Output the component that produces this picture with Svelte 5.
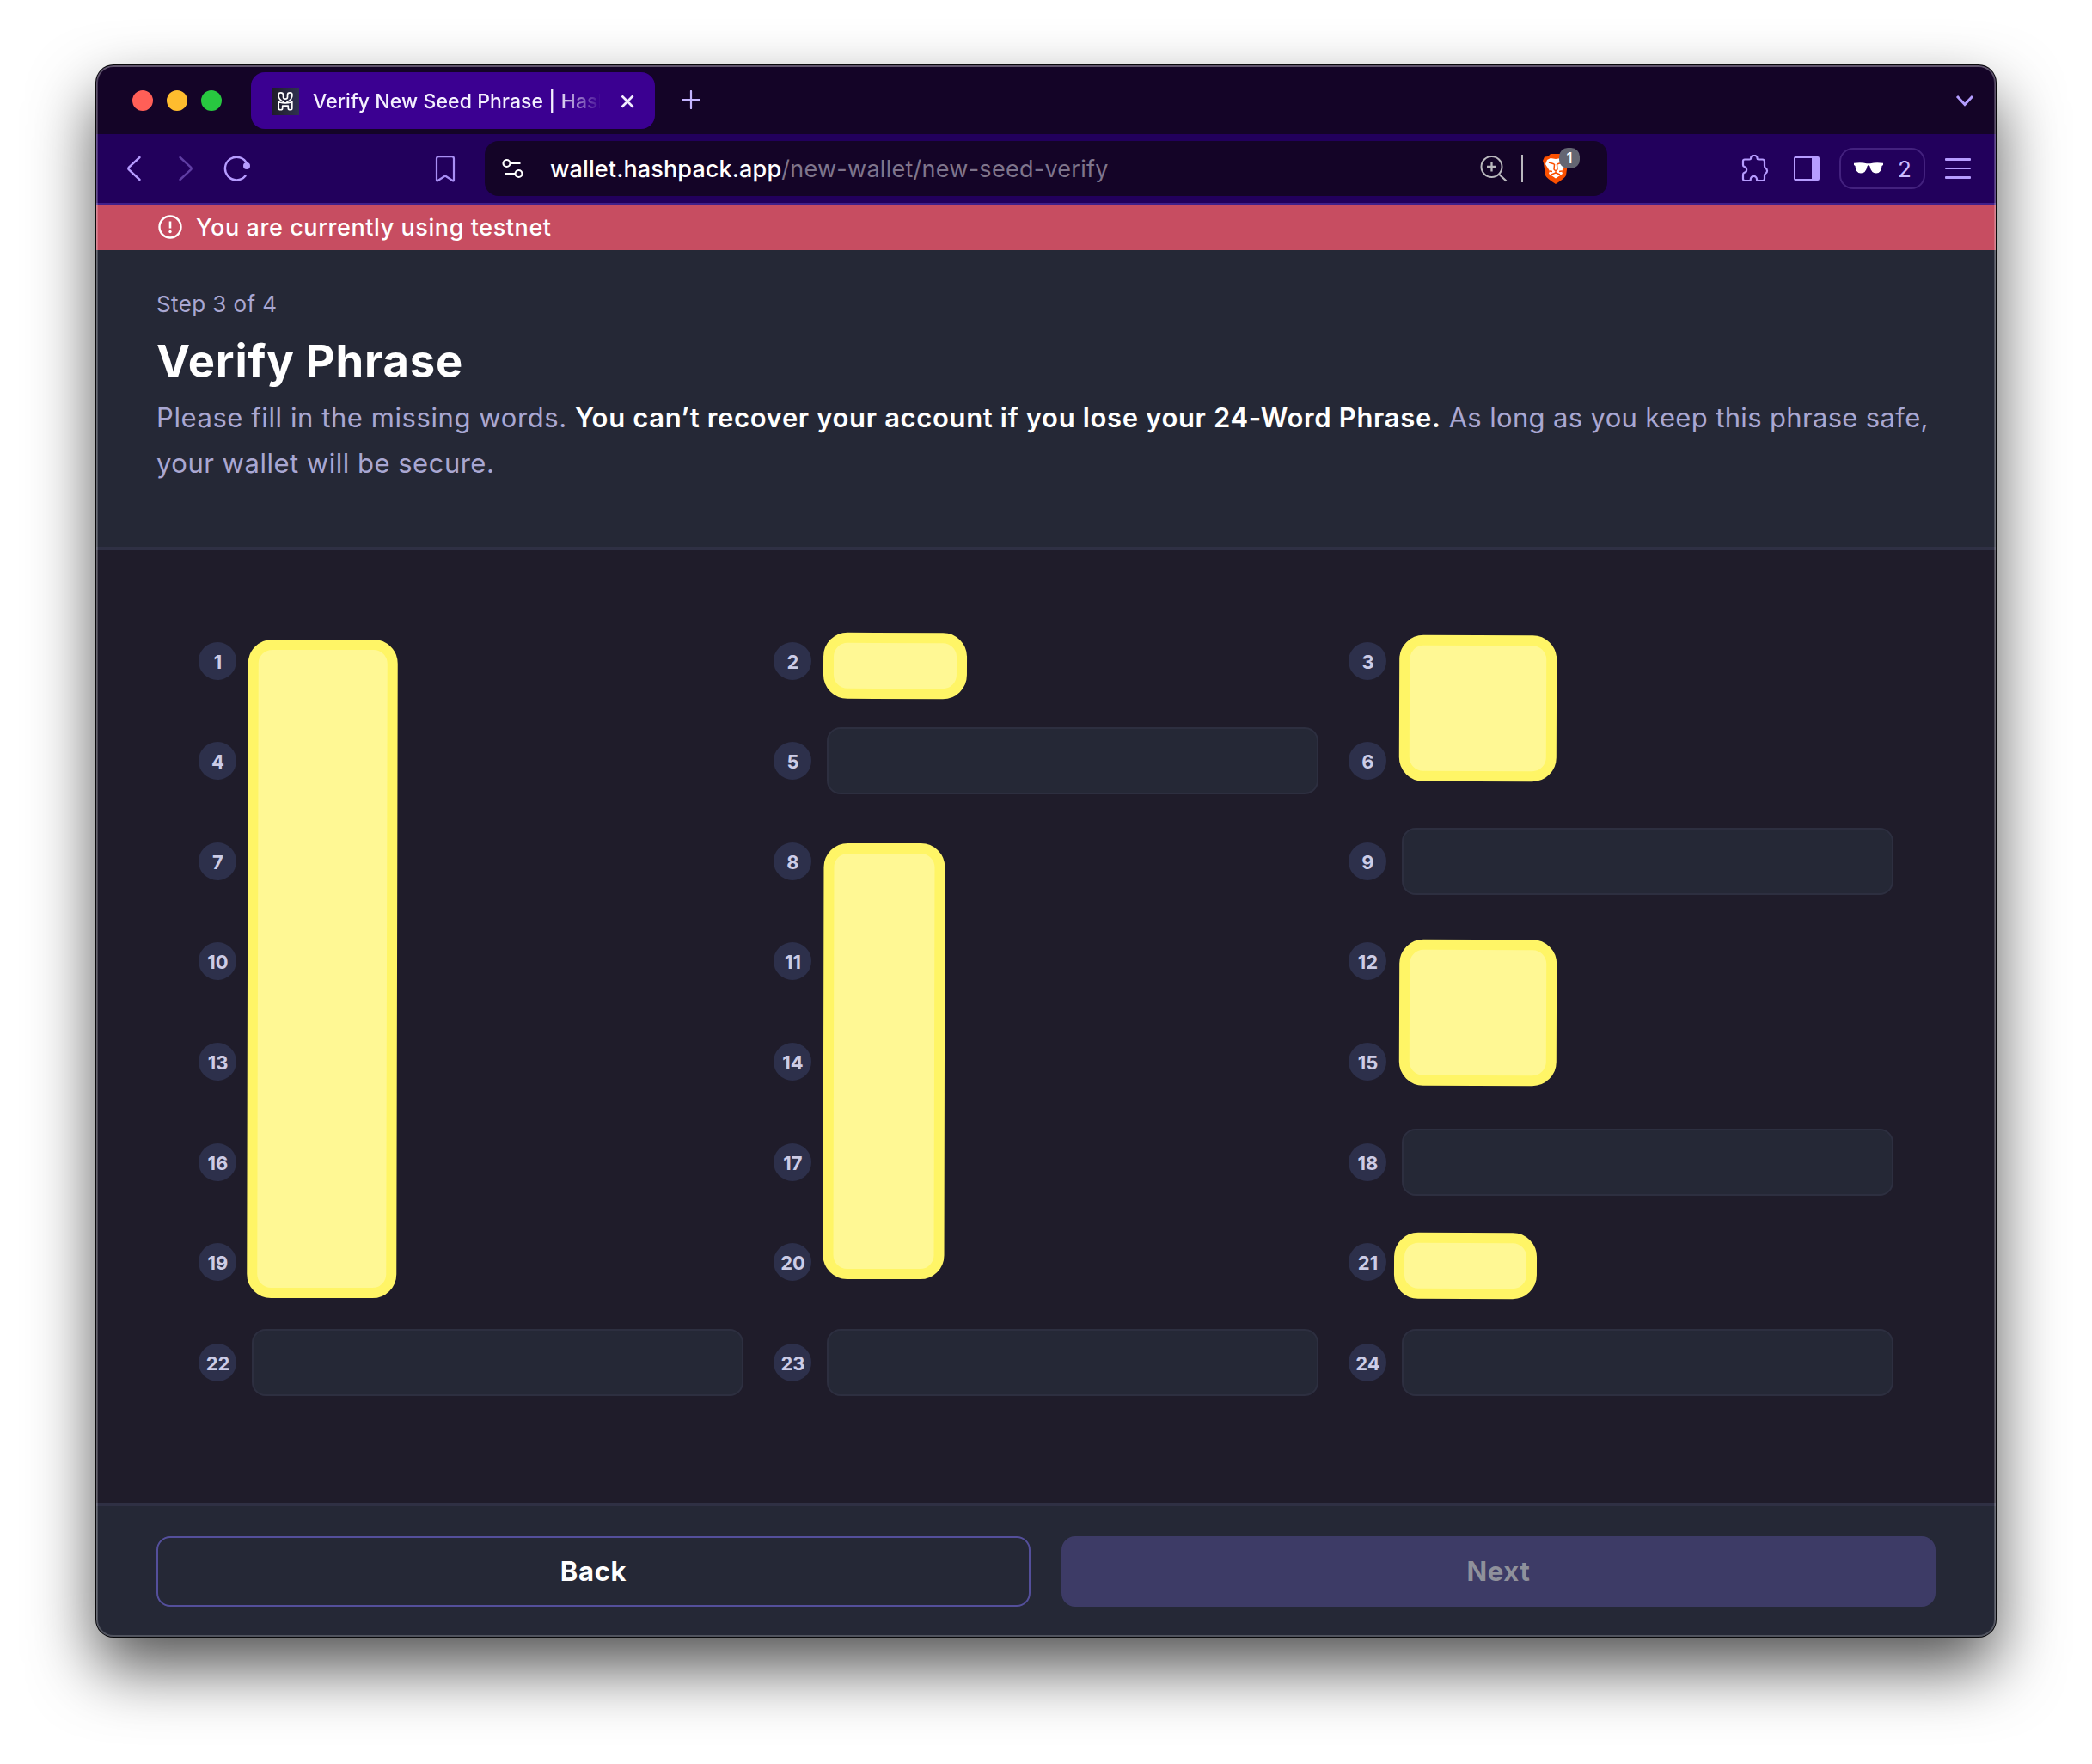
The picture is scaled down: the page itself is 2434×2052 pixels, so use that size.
<script>
  const blanks = new Set([5, 9, 18, 22, 23, 24]);
  const words = Array.from({ length: 24 }, (_, i) => ({ n: i + 1, blank: blanks.has(i + 1) }));

  // Redaction blocks laid over the word grid, relative to its top-left corner
  const covers = [
    { x: 57, y: 14, w: 173.5, h: 766, r: 0.12 },
    { x: 727, y: 6, w: 166.5, h: 76.5, r: 0.25 },
    { x: 1397, y: 9, w: 182.5, h: 170, r: 0.2 },
    { x: 727, y: 251.5, w: 141, h: 507, r: 0.12 },
    { x: 1397, y: 363, w: 182.5, h: 170, r: 0.2 },
    { x: 1391, y: 704, w: 166, h: 77, r: 0.2 }
  ];
</script>

<div class="desktop">
  <div class="window">
    <div class="tabbar">
      <div class="lights"><i class="red"></i><i class="amber"></i><i class="green"></i></div>
      <div class="tab">
        <svg class="favicon" viewBox="0 0 32 32">
          <defs>
            <linearGradient id="fav" x1="0" x2="1"><stop offset="0" stop-color="#1f1c29" /><stop offset="1" stop-color="#2f3250" /></linearGradient>
          </defs>
          <rect width="32" height="32" fill="url(#fav)" />
          <g fill="none" stroke="#fff" stroke-width="1.7" stroke-linejoin="round" stroke-linecap="round">
            <path d="M14 16.500C10 15.500 8 11.500 8 8.500C8 5 13.500 5 13.500 8.500V11C13.500 13.800 18.500 13.800 18.500 11V8.500C18.500 5 24 5 24 8.500C24 11.500 22 15.500 18 16.500" />
            <path d="M8.200 16V24C8.200 26.300 12.700 26.300 12.700 24V21.200H19.300V24C19.300 26.300 23.800 26.300 23.800 24V16M8.200 16C9 17.800 12 17.800 16 17.800S23 17.800 23.800 16" />
          </g>
        </svg>
        <div class="tab-title">Verify New Seed Phrase | HashPack</div>
        <svg class="close" viewBox="0 0 16 16"><path d="M1.500 1.500L14.500 14.500M14.500 1.500L1.500 14.500" stroke="#f1ecff" stroke-width="2.700" /></svg>
      </div>
      <svg class="plus" viewBox="0 0 22 22"><path d="M11 1V21M1 11H21" stroke="#c4b4ff" stroke-width="2.200" stroke-linecap="round" /></svg>
      <svg class="chev" viewBox="0 0 22 14"><path d="M2 2L11 11.500L20 2" fill="none" stroke="#b39dff" stroke-width="3" /></svg>
    </div>

    <div class="toolbar">
      <svg class="nav-back" viewBox="0 0 18 30"><path d="M15.500 2L3 13.500Q1.600 15 3 16.500L15.500 28" fill="none" stroke="#b69cff" stroke-width="2.400" stroke-linecap="round" /></svg>
      <svg class="nav-fwd" viewBox="0 0 18 30"><path d="M2.500 2L15 13.500Q16.400 15 15 16.500L2.500 28" fill="none" stroke="#5f3da3" stroke-width="2.400" stroke-linecap="round" /></svg>
      <svg class="reload" viewBox="0 0 32 30">
        <path d="M25.500 23.500A13.300 13.300 0 1 1 27.500 10" fill="none" stroke="#b69cff" stroke-width="2.400" stroke-linecap="round" />
        <circle cx="27" cy="12" r="4" fill="#b69cff" />
      </svg>
      <svg class="bookmark" viewBox="0 0 24 32"><path d="M4.500 2.200H19.500Q22 2.200 22 4.700V29.500Q22 31 20.500 30L12 24.500L3.500 30Q2 31 2 29.500V4.700Q2 2.200 4.500 2.200Z" fill="none" stroke="#a98ff5" stroke-width="2.200" stroke-linejoin="round" /></svg>
      <div class="url">
        <svg class="tune" viewBox="0 0 26 24">
          <g fill="none" stroke="#fff" stroke-width="2.200">
            <circle cx="5.500" cy="6" r="4" /><path d="M9.500 6H21.500" />
            <circle cx="19.500" cy="18" r="4" /><path d="M3.500 18H15.500" />
          </g>
        </svg>
        <div class="address"><b>wallet.hashpack.app</b>/new-wallet/new-seed-verify</div>
        <svg class="zoom" viewBox="0 0 32 32">
          <g fill="none" stroke="#b9b8bd" stroke-width="2"><circle cx="13.500" cy="14" r="12" /><path d="M13.500 8.500V19.500M8 14H19M22 22.500L30.500 30.500" stroke-width="2.300" /></g>
        </svg>
        <div class="divider"></div>
        <div class="shield">
          <svg viewBox="0 0 30 36">
            <path d="M9 1H21L24 4L28 4.500L30 9L29 12L27 26Q26 29 15 36Q4 29 3 26L1 12L0 9L2 4.500L6 4Z" fill="#fb5000" />
            <path d="M5 8L9 6L15 7L21 6L25 8L27 13L22 21L23 24L15 29.500L7 24L8 21L3 13Z" fill="#fff" />
            <path d="M7 11L12 12.500L13.500 13.500L13 19L15 21L17 19L16.500 13.500L18 12.500L23 11M15 21V23L10 25M15 23L20 25M8 21L11 21.500M22 21L19 21.500" fill="none" stroke="#fb5000" stroke-width="1.500" />
          </svg>
          <span class="badge">1</span>
        </div>
      </div>
      <svg class="puzzle" viewBox="0 0 32 32">
        <path d="M4 5.500H9.500Q11 5.500 11 4.500A3.800 3.800 0 0 1 18.600 4.500Q18.600 5.500 20 5.500H24.500Q27 5.500 27 8V13Q27 15 28 15.500A3.600 3.600 0 0 1 28 22Q27 22.500 27 24V28Q27 30 25 30H19.500Q18 30 18 28.500A3.600 3.600 0 0 0 10.800 28.500Q10.800 30 9.500 30H4Q2 30 2 28V23Q2 21.500 3.500 20.800A3.500 3.500 0 0 0 3.500 14Q2 13.500 2 12V7.500Q2 5.500 4 5.500Z" fill="none" stroke="#b69cff" stroke-width="2.200" stroke-linejoin="round" />
      </svg>
      <svg class="panel" viewBox="0 0 30 28"><rect x="1" y="1" width="28" height="26" rx="1" fill="none" stroke="#b69cff" stroke-width="2" /><path d="M21 1H28Q29 1 29 2V26Q29 27 28 27H21Z" fill="#b69cff" /></svg>
      <div class="pill">
        <svg class="glasses" viewBox="0 0 34 13"><path d="M0 .8Q8 -.5 15 1.200H19Q26 -.5 34 .8V3L32.500 4Q32 12.500 26 12.500Q20 12.500 18.500 4.500Q18 3.200 17 3.200T15.500 4.500Q14 12.500 8 12.500Q2 12.500 1.500 4L0 3Z" fill="#fff" /></svg>
        <span>2</span>
      </div>
      <div class="burger"><i></i><i></i><i></i></div>
    </div>

    <div class="banner">
      <svg viewBox="0 0 28 28"><circle cx="14" cy="14" r="12.500" fill="none" stroke="#fff" stroke-width="2.400" /><path d="M14 7.500V15.500" stroke="#fff" stroke-width="2.600" /><circle cx="14" cy="19.500" r="1.700" fill="#fff" /></svg>
      <span>You are currently using testnet</span>
    </div>

    <header>
      <p class="step">Step 3 of 4</p>
      <h1>Verify Phrase</h1>
      <p class="lead">
        <span class="intro">Please fill in the missing words.</span>
        <b>You can’t recover your account if you lose your 24-Word Phrase.</b>
        <span class="advice">As long as you keep this phrase safe,</span><br />your wallet will be secure.
      </p>
    </header>

    <main>
      <div class="grid">
        {#each words as w (w.n)}
          <div class="word">
            <span class="num">{w.n}</span>
            {#if w.blank}<input class="field" aria-label={`Word ${w.n}`} />{/if}
          </div>
        {/each}
        {#each covers as c}
          <div class="cover" style="left:{c.x}px;top:{c.y}px;width:{c.w}px;height:{c.h}px;transform:rotate({c.r}deg)"></div>
        {/each}
      </div>
    </main>

    <footer>
      <button class="back">Back</button>
      <button class="next" disabled>Next</button>
    </footer>
  </div>
</div>

<style>
  :global(body) { background: #fff; }
  .desktop {
    box-sizing: border-box;
    width: 2434px;
    height: 2052px;
    padding: 76px 112px 0;
    overflow: hidden;
    font-family: Inter, "Liberation Sans", sans-serif;
  }
  .window {
    position: relative;
    display: flex;
    flex-direction: column;
    width: 2210px;
    height: 1828px;
    border-radius: 20px;
    overflow: hidden;
    background: #252836;
    box-shadow: 0 0 0 1px #08080a, 0 36px 76px rgba(0, 0, 0, 0.68);
  }
  .window::after {
    content: "";
    position: absolute;
    inset: 0;
    border-radius: 20px;
    box-shadow: inset 0 0 0 2px rgba(255, 255, 255, 0.2), inset 0 1px 0 1px rgba(255, 255, 255, 0.15);
    pointer-events: none;
  }
  svg { display: block; flex: none; }

  .tabbar { display: flex; align-items: center; height: 80px; padding-left: 42px; background: #140427; flex: none; }
  .lights { display: flex; gap: 16px; margin-top: 2px; }
  .lights i { width: 24px; height: 24px; border-radius: 50%; }
  .red { background: #ff5f57; }
  .amber { background: #febc2e; }
  .green { background: #28c840; }
  .tab {
    box-sizing: border-box;
    display: flex;
    align-items: center;
    width: 470px;
    height: 66px;
    margin: 2px 0 0 34px;
    padding-left: 24px;
    border-radius: 16px;
    background: #3b0091;
  }
  .favicon { width: 32px; height: 32px; margin-top: 2px; }
  .tab-title {
    width: 334px;
    margin: 2px 0 0 16px;
    overflow: hidden;
    white-space: nowrap;
    font-size: 23px;
    font-weight: 500;
    letter-spacing: 0.1px;
    line-height: 32px;
    color: #f4f0ff;
    -webkit-mask-image: linear-gradient(90deg, #000 284px, transparent 336px);
    mask-image: linear-gradient(90deg, #000 284px, transparent 336px);
  }
  .close { width: 16px; height: 16px; margin: 2px 0 0 24px; }
  .plus { width: 22px; height: 22px; margin-left: 31px; }
  .chev { width: 22px; height: 14px; margin: 1px 25px 0 auto; }

  .toolbar {
    box-sizing: border-box;
    display: flex;
    align-items: center;
    height: 82px;
    padding-left: 35px;
    background: #22005c;
    border-bottom: 2px solid #41208a;
    flex: none;
  }
  .nav-back, .nav-fwd { width: 18px; height: 30px; }
  .nav-fwd { margin-left: 42px; }
  .reload { width: 32px; height: 30px; margin-left: 35px; }
  .bookmark { width: 24px; height: 32px; margin-left: 214px; }
  .url {
    box-sizing: border-box;
    display: flex;
    align-items: center;
    width: 1306px;
    height: 64px;
    margin-left: 34px;
    padding-left: 20px;
    border-radius: 16px;
    background: #140427;
  }
  .tune { width: 26px; height: 24px; }
  .address {
    flex: 1;
    margin: 1px 0 0 30px;
    white-space: nowrap;
    font-size: 27px;
    letter-spacing: 0.27px;
    line-height: 40px;
    color: #7f758c;
  }
  .address b { font-weight: 500; letter-spacing: 0.13px; color: #fff; }
  .zoom { width: 32px; height: 32px; }
  .divider { width: 2px; height: 32px; margin-left: 16px; background: #b9b8bd; }
  .shield { position: relative; width: 75px; height: 36px; margin-left: 23px; }
  .shield svg { width: 30px; height: 36px; }
  .badge {
    position: absolute;
    left: 19px;
    top: -6px;
    width: 24px;
    height: 24px;
    border-radius: 10px;
    background: #646672;
    color: #fff;
    font-size: 17px;
    font-weight: 500;
    line-height: 24px;
    text-align: center;
  }
  .puzzle { width: 32px; height: 32px; margin-left: 156px; }
  .panel { width: 30px; height: 28px; margin-left: 29px; }
  .pill {
    box-sizing: border-box;
    display: flex;
    align-items: center;
    width: 100px;
    height: 48px;
    margin-left: 23px;
    padding-left: 15px;
    border: 2px solid #43217e;
    border-radius: 16px;
    color: #cbbcff;
    font-size: 26px;
  }
  .glasses { width: 34px; height: 13px; margin: -2px 17px 0 0; }
  .burger { display: flex; flex-direction: column; gap: 8px; margin-left: 23px; }
  .burger i { width: 30px; height: 2.5px; border-radius: 1px; background: #b69cff; }

  .banner {
    box-sizing: border-box;
    display: flex;
    align-items: center;
    gap: 16px;
    height: 53px;
    padding: 0 0 1px 72px;
    background: #c74d61;
    color: #fff;
    font-size: 27px;
    font-weight: 500;
    letter-spacing: 0.58px;
    flex: none;
  }
  .banner svg { width: 28px; height: 28px; }

  header {
    box-sizing: border-box;
    height: 349px;
    padding: 43px 70px 0;
    background: #252836;
    border-bottom: 4px solid #2f3044;
    color: #a9a7d2;
    flex: none;
  }
  p, h1 { margin: 0; }
  .step { font-size: 26px; letter-spacing: 0.4px; line-height: 40px; }
  h1 { font-size: 52.5px; font-weight: 700; letter-spacing: 0.8px; line-height: 64px; margin-top: 14px; color: #fff; }
  .lead { margin-top: 7px; font-size: 31px; letter-spacing: 0.5px; line-height: 53px; white-space: nowrap; }
  .lead b { font-weight: 600; letter-spacing: 0.65px; color: #fff; }
  .intro { letter-spacing: 0.58px; }
  .advice { letter-spacing: 0.34px; }

  main { box-sizing: border-box; height: 1108px; padding: 90px 119px 0; background: #1f1c2a; flex: none; }
  .grid {
    position: relative;
    display: grid;
    grid-template-columns: repeat(3, 634px);
    grid-auto-rows: 78px;
    column-gap: 35px;
    row-gap: 38.57px;
    margin-top: -0.3px;
  }
  .word { display: flex; align-items: center; }
  .num {
    box-sizing: border-box;
    width: 44px;
    height: 44px;
    padding-left: 1px;
    border-radius: 50%;
    background: #2d304b;
    color: #cccce6;
    font-size: 22px;
    font-weight: 700;
    line-height: 46px;
    text-align: center;
  }
  .field {
    box-sizing: border-box;
    width: 572px;
    height: 78px;
    margin: 0 0 0 18px;
    border: 2px solid #2d2f40;
    border-radius: 16px;
    background: #252836;
  }
  .cover { position: absolute; box-sizing: border-box; border: 12px solid #fff566; border-radius: 28px; background: #fff894; }

  footer {
    box-sizing: border-box;
    display: grid;
    grid-template-columns: 1fr 1fr;
    align-content: start;
    gap: 36px;
    flex: 1;
    padding: 35px 70px 0;
    background: #252836;
    border-top: 4px solid #2f3044;
  }
  button {
    box-sizing: border-box;
    height: 82px;
    padding: 0;
    border: 2px solid transparent;
    border-radius: 16px;
    font: 700 31px/78px Inter, sans-serif;
    letter-spacing: 0.7px;
  }
  .back { border-color: #544f9b; background: transparent; color: #fff; }
  .next { border-color: #3d3b66; background: #3d3b66; color: #8f919b; }
</style>
